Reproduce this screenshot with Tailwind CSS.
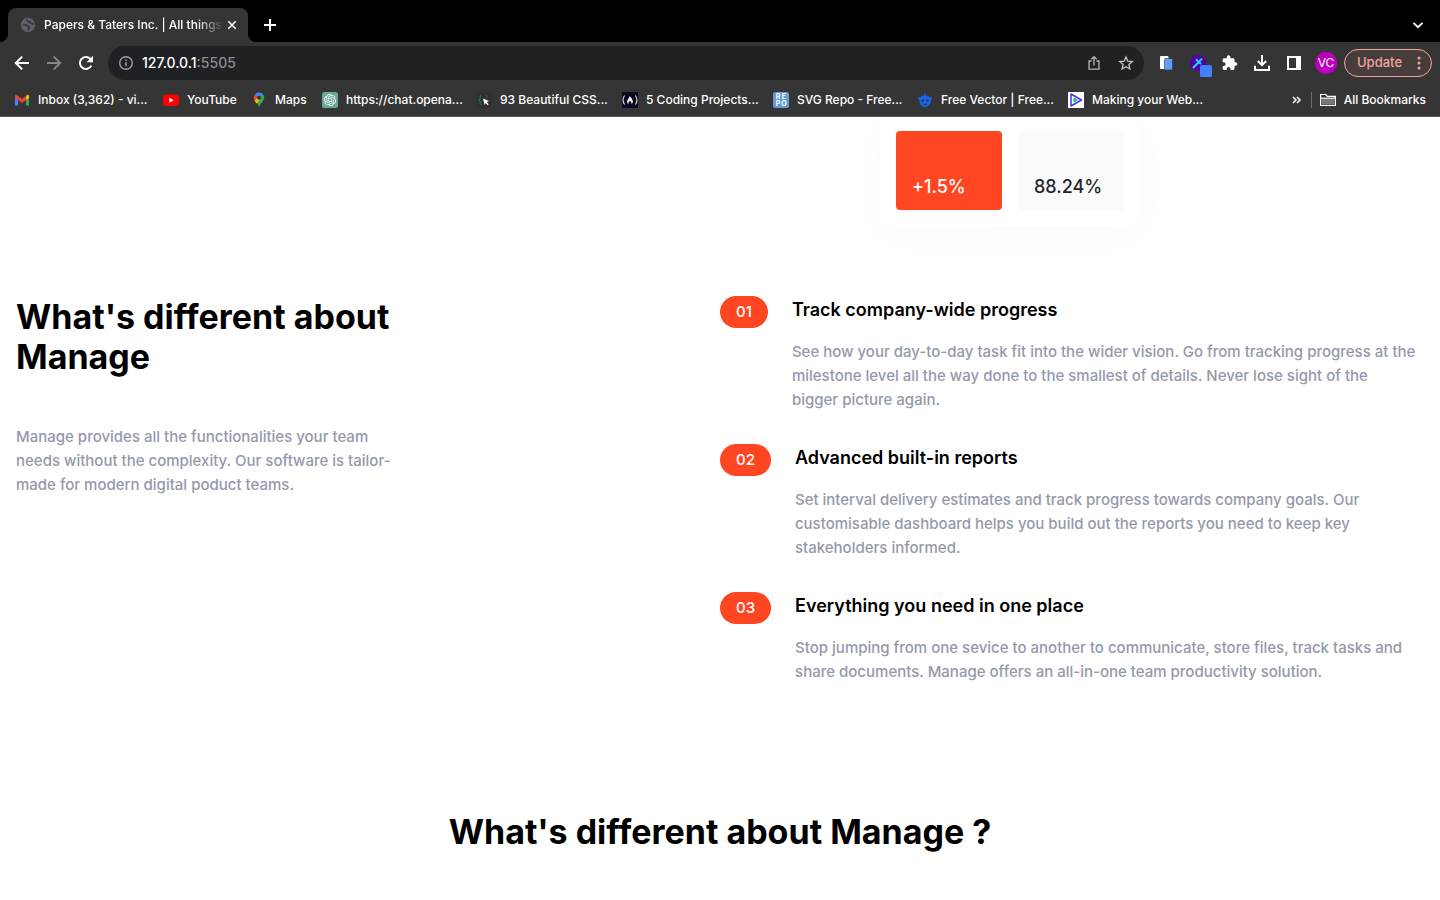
<!DOCTYPE html>
<html lang="en">
<head>
<meta charset="utf-8">
<meta name="viewport" content="width=device-width, initial-scale=1">
<title>Papers &amp; Taters Inc. | All things</title>
<script src="https://cdn.jsdelivr.net/npm/@tailwindcss/browser@4"></script>
</head>
<body class="flex min-h-screen flex-col overflow-x-hidden bg-white font-[Inter,sans-serif] text-black">
<header class="text-white">
  <!-- Tab strip -->
  <div class="flex h-[42px] items-end bg-black">
    <div class="flex items-end">
      <svg class="h-2 w-2" viewBox="0 0 8 8"><path d="M8 0v8H0a8 8 0 0 0 8-8z" fill="#353535"/></svg>
      <div class="flex h-[34px] w-60 items-center rounded-t-lg bg-[#353535] pr-2 pl-3">
        <svg class="h-4 w-4 shrink-0" viewBox="0 0 16 16"><circle cx="8" cy="8" r="7.2" fill="#5f6368"/><path d="M3.2 7.2c1.800 1 3.600.3 4.300 1.500.7 1.200 1.800.5 1.900 1.900.1 1.200-1.300 1.500-1.400 3M7.300 2.400c-.7 1.600.500 2.200 1.700 2.300 1.300.2 1 1.700 2.600 1.900.9.100 1.400.1 2 .7" fill="none" stroke="#353535" stroke-width="1.700"/></svg>
        <span class="ml-2 flex-1 overflow-hidden text-xs font-medium whitespace-nowrap [mask-image:linear-gradient(to_right,black_84%,transparent)]">Papers &amp; Taters Inc. | All things</span>
        <button class="flex h-4 w-4 items-center justify-center" aria-label="Close tab"><svg class="h-4 w-4" viewBox="0 0 16 16"><path d="M4.300 4.300l7.400 7.400M11.700 4.300l-7.400 7.400" stroke="#fff" stroke-width="1.500"/></svg></button>
      </div>
      <svg class="h-2 w-2" viewBox="0 0 8 8"><path d="M0 0v8h8a8 8 0 0 1-8-8z" fill="#353535"/></svg>
    </div>
    <button class="ml-1 flex h-[34px] w-5 items-center justify-center" aria-label="New tab"><svg class="h-4 w-4" viewBox="0 0 16 16"><path d="M8 2v12M2 8h12" stroke="#fff" stroke-width="2"/></svg></button>
    <button class="mr-3 ml-auto flex h-[34px] w-5 items-center justify-center" aria-label="Search tabs"><svg class="h-4 w-4" viewBox="0 0 16 16"><path d="M3.500 5.800L8 10.200l4.500-4.400" fill="none" stroke="#fff" stroke-width="1.800"/></svg></button>
  </div>

  <!-- Toolbar -->
  <div class="flex h-[42px] items-center bg-[#353535] pr-2 pl-3">
    <div class="flex gap-3">
      <button aria-label="Back"><svg class="h-5 w-5" viewBox="0 0 20 20"><path d="M17 10H4M10.200 3.600L3.800 10l6.400 6.400" fill="none" stroke="#fff" stroke-width="2"/></svg></button>
      <button aria-label="Forward"><svg class="h-5 w-5" viewBox="0 0 20 20"><path d="M3 10h13M9.800 3.600l6.400 6.400-6.400 6.400" fill="none" stroke="#868686" stroke-width="2"/></svg></button>
      <button aria-label="Reload"><svg class="h-5 w-5" viewBox="0 0 20 20"><path d="M15.300 12.600A6 6 0 1 1 14.300 5.800L16 7.500" fill="none" stroke="#fff" stroke-width="2"/><path d="M17 2.800v6.400h-6.400z" fill="#fff"/></svg></button>
    </div>
    <div class="ml-3 flex h-[34px] flex-1 items-center rounded-full bg-[#202124] pr-2 pl-[10px]">
      <svg class="h-4 w-4" viewBox="0 0 16 16"><circle cx="8" cy="8" r="6.300" fill="none" stroke="#9aa0a6" stroke-width="1.400"/><path d="M8 7v4.300M8 4.500v1.600" stroke="#9aa0a6" stroke-width="1.500"/></svg>
      <a href="#" class="ml-2 text-sm font-medium text-[#8b8f94]" aria-label="Address"><span class="text-white">127.0.0.1</span>:5505</a>
      <button class="ml-auto" aria-label="Share"><svg class="h-5 w-5" viewBox="0 0 20 20"><path d="M7.500 8H5v8.200h10V8h-2.500M10 12.500V4M7.300 6.300L10 3.600l2.700 2.700" fill="none" stroke="#b5b7b9" stroke-width="1.300"/></svg></button>
      <button class="ml-3" aria-label="Bookmark this tab"><svg class="h-5 w-5" viewBox="0 0 20 20"><path d="M10 4l1.800 4.200 4.500.4-3.400 3 1 4.400-3.900-2.300-3.900 2.300 1-4.400-3.400-3 4.500-.4z" fill="none" stroke="#c4c6c8" stroke-width="1.300"/></svg></button>
    </div>
    <div class="ml-3 flex items-center gap-3">
      <button aria-label="Copy extension"><svg class="h-5 w-5" viewBox="0 0 20 20"><rect x="4" y="3" width="8.500" height="13" rx="1" fill="#fff"/><rect x="8.500" y="5.500" width="8" height="11.500" rx="1.200" fill="#5b9df8" stroke="#353535" stroke-width=".6"/></svg></button>
      <button aria-label="Colour picker extension"><svg class="h-5 w-5 overflow-visible" viewBox="0 0 20 20"><circle cx="10" cy="10" r="8" fill="#5500b0"/><path d="M5 15l6.500-6.800" stroke="#19d8f0" stroke-width="2"/><path d="M8 6.200l5 4.800M11 8.600l3-3" stroke="#19d8f0" stroke-width="2"/><rect x="12" y="12" width="12" height="12" rx="1.500" fill="#4380ff"/></svg></button>
      <button class="p-[2px]" aria-label="Extensions"><svg class="h-4 w-4" viewBox="1 1 23 22"><path d="M20.500 11H19V7c0-1.100-.9-2-2-2h-4V3.500a2.500 2.500 0 0 0-5 0V5H4c-1.100 0-2 .9-2 2v3.800h1.500a2.700 2.700 0 0 1 0 5.400H2V20c0 1.100.9 2 2 2h3.800v-1.500a2.700 2.700 0 0 1 5.400 0V22H17c1.100 0 2-.9 2-2v-4h1.500a2.500 2.500 0 0 0 0-5z" fill="#fff"/></svg></button>
      <button aria-label="Downloads"><svg class="h-5 w-5" viewBox="0 0 20 20"><path d="M10 2v10M5.800 8L10 12.200 14.200 8M3 12.800V17h14v-4.200" fill="none" stroke="#fff" stroke-width="2"/></svg></button>
      <button aria-label="Side panel"><svg class="h-5 w-5" viewBox="0 0 20 20"><path d="M3 3h14v14H3zM5 5v10h7V5z" fill="#fff" fill-rule="evenodd"/></svg></button>
    </div>
    <button class="ml-[11px] flex h-[22px] w-[22px] items-center justify-center rounded-full bg-[#bb00bd] text-xs" aria-label="Profile">VC</button>
    <button class="ml-[7px] flex h-7 w-[88px] items-center justify-between rounded-full border border-[#f5a49d] bg-[#483d3d] pr-2 pl-3 text-[13px] font-medium text-[#f5a49d]">Update<svg class="h-4 w-2" viewBox="0 0 8 16"><circle cx="4" cy="3" r="1.500" fill="#f5a49d"/><circle cx="4" cy="8" r="1.500" fill="#f5a49d"/><circle cx="4" cy="13" r="1.500" fill="#f5a49d"/></svg></button>
  </div>

  <!-- Bookmarks bar -->
  <nav class="flex h-[33px] items-center border-b border-[#5a5a5a] bg-[#353535] pr-[14px] pl-[14px] text-xs font-medium whitespace-nowrap">
    <a href="#" class="flex w-[149px] items-center gap-2"><svg class="h-4 w-4" viewBox="0 0 16 16"><path d="M1 4v9.500h3V7z" fill="#4285f4"/><path d="M15 4v9.500h-3V7z" fill="#34a853"/><path d="M12 4.200L13.200 3c.8-.6 1.800 0 1.800 1v1.800l-3 2.300z" fill="#fbbc04"/><path d="M1 4c0-1.100 1-1.600 1.800-1L8 7l4-3v4.100L8 11 1 5.800z" fill="#ea4335"/></svg>Inbox (3,362) - vi...</a>
    <a href="#" class="flex w-[88px] items-center gap-2"><svg class="h-4 w-4" viewBox="0 0 16 16"><rect y="2.500" width="16" height="11.500" rx="3" fill="#f00"/><path d="M6.400 5.800v4.900l4.200-2.450z" fill="#fff"/></svg>YouTube</a>
    <a href="#" class="flex w-[71px] items-center gap-2"><svg class="h-4 w-4" viewBox="0 0 16 16"><path d="M8 .5a5.300 5.300 0 0 1 5.300 5.300C13.300 9.800 9.200 10.500 8 15.500c-.5-2-1.400-3.300-2.400-4.400z" fill="#34a853"/><path d="M3.900 2.500A5.300 5.300 0 0 1 12.100 2.500L8 7.500z" fill="#4285f4"/><path d="M3.900 2.500L7 5.200 3.500 8.400C2.400 6.300 2.500 4.100 3.900 2.500z" fill="#ea4335"/><path d="M3.500 8.400L7 5l2.600 2.300-4 4.100c-.8-.9-1.600-1.900-2.100-3z" fill="#fbbc04"/><circle cx="8" cy="5.800" r="2" fill="#353535"/></svg>Maps</a>
    <a href="#" class="flex w-[154px] items-center gap-2"><svg class="h-4 w-4" viewBox="-4 -4 32 32"><rect x="-4" y="-4" width="32" height="32" rx="5" fill="#6aa999"/><path fill="#fff" d="M22.2819 9.8211a5.9847 5.9847 0 0 0-.5157-4.9108 6.0462 6.0462 0 0 0-6.5098-2.9A6.0651 6.0651 0 0 0 4.9807 4.1818a5.9847 5.9847 0 0 0-3.9977 2.9 6.0462 6.0462 0 0 0 .7427 7.0966 5.98 5.98 0 0 0 .511 4.9107 6.051 6.051 0 0 0 6.5146 2.9001A5.9847 5.9847 0 0 0 13.2599 24a6.0557 6.0557 0 0 0 5.7718-4.2058 5.9894 5.9894 0 0 0 3.9977-2.9001 6.0557 6.0557 0 0 0-.7475-7.073zm-9.022 12.6081a4.4755 4.4755 0 0 1-2.8764-1.0408l.1419-.0804 4.7783-2.7582a.7948.7948 0 0 0 .3927-.6813v-6.7369l2.02 1.1686a.071.071 0 0 1 .038.052v5.5826a4.504 4.504 0 0 1-4.4945 4.4944zm-9.6607-4.1254a4.4708 4.4708 0 0 1-.5346-3.0137l.142.0852 4.783 2.7582a.7712.7712 0 0 0 .7806 0l5.8428-3.3685v2.3324a.0804.0804 0 0 1-.0332.0615L9.74 19.9502a4.4992 4.4992 0 0 1-6.1408-1.6464zM2.3408 7.8956a4.485 4.485 0 0 1 2.3655-1.9728V11.6a.7664.7664 0 0 0 .3879.6765l5.8144 3.3543-2.0201 1.1685a.0757.0757 0 0 1-.071 0l-4.8303-2.7865A4.504 4.504 0 0 1 2.3408 7.872zm16.5963 3.8558L13.1038 8.364 15.1192 7.2a.0757.0757 0 0 1 .071 0l4.8303 2.7913a4.4944 4.4944 0 0 1-.6765 8.1042v-5.6772a.79.79 0 0 0-.407-.667zm2.0107-3.0231l-.142-.0852-4.7735-2.7818a.7759.7759 0 0 0-.7854 0L9.409 9.2297V6.8974a.0662.0662 0 0 1 .0284-.0615l4.8303-2.7866a4.4992 4.4992 0 0 1 6.6802 4.66zM8.3065 12.863l-2.02-1.1638a.0804.0804 0 0 1-.038-.0567V6.0742a4.4992 4.4992 0 0 1 7.3757-3.4537l-.142.0805L8.704 5.459a.7948.7948 0 0 0-.3927.6813zm1.0976-2.3654l2.602-1.4998 2.6069 1.4998v2.9994l-2.5974 1.4997-2.6067-1.4997z"/></svg>https://chat.opena...</a>
    <a href="#" class="flex w-[146px] items-center gap-2"><svg class="h-4 w-4" viewBox="0 0 16 16"><rect width="16" height="16" rx="2" fill="#303030"/><path d="M5.500 3.500c-1.600 0-1.300 1-1.300 2.500S3.500 8 2.500 8c1 0 1.700.5 1.700 2s-.3 2.500 1.300 2.500M9.500 3.500c1.600 0 1.300 1 1.300 2" fill="none" stroke="#12834f" stroke-width="1.200"/><path d="M7 6.500l6 2.500-2.300 1 2 2.300-1 .9-2-2.300-1.100 2z" fill="#fff"/></svg>93 Beautiful CSS...</a>
    <a href="#" class="flex w-[151px] items-center gap-2"><svg class="h-4 w-4" viewBox="0 0 16 16"><path d="M0 0h16v16H0z" fill="#0a0a23"/><path d="M2.600 3.500c-2 2.500-2 6.500 0 9M13.400 3.500c2 2.500 2 6.500 0 9" fill="none" stroke="#ddd" stroke-width="1.100"/><path d="M7.800 4c1 1.600 3 3.400 3 5.500 0 1.200-.5 2.200-1.300 2.700.4-1.300 0-2.300-1.500-3.400-1.500 1.100-1.900 2.100-1.500 3.400-.8-.5-1.300-1.500-1.300-2.700 0-1.800 2-2.800 2.600-5.500z" fill="#fff"/></svg>5 Coding Projects...</a>
    <a href="#" class="flex w-[144px] items-center gap-2"><span class="grid h-4 w-4 shrink-0 grid-cols-2 justify-items-center rounded-xs bg-[#659bd3] px-[2px] py-px text-[7px] leading-[7px] font-bold" aria-label="SVG Repo logo"><span>R</span><span>E</span><span>P</span><span>O</span></span>SVG Repo - Free...</a>
    <a href="#" class="flex w-[151px] items-center gap-2"><svg class="h-4 w-4" viewBox="0 0 16 16"><path d="M7.300 1l1.200 0 .3 2.800h-1.500zM3.200 5.500C5 3 11 3 12.800 5.500l2.200-.3-.3 2.200-1.200.6c.5 4-2 7-5.500 7s-6-3-5.500-7L1.300 7.400.8 5.200zM5 3l1 1.500-1.300.5zM11 3l-1 1.500 1.300.5z" fill="#1767ee"/><circle cx="5.700" cy="8.500" r="1.300" fill="#353535"/><circle cx="10.300" cy="8.500" r="1.300" fill="#353535"/><path d="M6 11.800c1.300.8 2.700.8 4 0" stroke="#353535" fill="none"/></svg>Free Vector | Free...</a>
    <a href="#" class="flex items-center gap-2"><svg class="h-4 w-4" viewBox="0 0 16 16"><path d="M0 0h16v16H0z" fill="#fff"/><path d="M3 2l10.500 6L3 14z" fill="none" stroke="#512fe8" stroke-width="1.500" stroke-linejoin="round"/><path d="M5.500 5.300L10 8l-4.500 2.700z" fill="#16b7b0"/></svg>Making your Web...</a>
    <button class="mr-1 ml-auto px-[2px]" aria-label="More bookmarks"><svg class="h-4 w-4" viewBox="0 0 16 16"><path d="M4 5l3 3-3 3M8 5l3 3-3 3" fill="none" stroke="#fff" stroke-width="1.500"/></svg></button>
    <span class="h-4 w-px bg-[#6d6d6d]"></span>
    <a href="#" class="ml-2 flex items-center gap-2"><svg class="h-4 w-4" viewBox="0 0 16 16"><path d="M.6 13.500V2.500h5.200l1.500 1.800h8.100v9.200z" fill="none" stroke="#fff" stroke-width="1.200"/><path d="M1.500 6.800h13v5.800h-13z" fill="#777"/><path d="M.6 6.200h14.800" stroke="#fff" stroke-width="1.200"/></svg>All Bookmarks</a>
  </nav>
</header>

<main class="flex-1">
  <!-- Lower edge of the hero dashboard card -->
  <section class="grid grid-cols-2 overflow-hidden pb-8">
    <div class="col-start-2 ml-40 grid w-[260px] grid-cols-2 gap-4 rounded-b-lg bg-white px-4 pt-[14px] pb-4 shadow-[0_8px_40px_#00000005]">
      <div class="flex h-[79px] items-end rounded-sm bg-[#ff4622] px-4 pb-[9px] text-lg font-medium text-white">+1.5%</div>
      <div class="flex h-[79px] items-end rounded-sm bg-[#fafafa] px-4 pb-[9px] text-lg font-medium text-[#1d262d]">88.24%</div>
    </div>
  </section>

  <section class="grid grid-cols-2 px-4 pt-[38px]">
    <div class="max-w-96 pt-px">
      <h2 class="text-[34px] leading-10 font-bold">What's different about Manage</h2>
      <p class="mt-12 text-[15px] leading-6 font-medium text-[#9499aa]">Manage provides all the functionalities your team needs without the complexity. Our software is tailor-made for modern digital poduct teams.</p>
    </div>
    <ol class="flex flex-col gap-8">
      <li class="flex items-start gap-6">
        <span class="rounded-full bg-[#ff4622] px-4 py-1 text-[15px] leading-6 font-medium text-white">01</span>
        <div><h3 class="text-lg leading-7 font-semibold">Track company-wide progress</h3>
        <p class="mt-4 text-[15px] leading-6 font-medium text-[#9499aa]">See how your day-to-day task fit into the wider vision. Go from tracking progress at the milestone level all the way done to the smallest of details. Never lose sight of the bigger&nbsp;picture again.</p></div>
      </li>
      <li class="flex items-start gap-6">
        <span class="rounded-full bg-[#ff4622] px-4 py-1 text-[15px] leading-6 font-medium text-white">02</span>
        <div><h3 class="text-lg leading-7 font-semibold">Advanced built-in reports</h3>
        <p class="mt-4 text-[15px] leading-6 font-medium text-[#9499aa]">Set interval delivery estimates and track progress towards company goals. Our customisable dashboard helps you build out the reports you need to keep key stakeholders informed.</p></div>
      </li>
      <li class="flex items-start gap-6">
        <span class="rounded-full bg-[#ff4622] px-4 py-1 text-[15px] leading-6 font-medium text-white">03</span>
        <div><h3 class="text-lg leading-7 font-semibold">Everything you need in one place</h3>
        <p class="mt-4 text-[15px] leading-6 font-medium text-[#9499aa]">Stop jumping from one sevice to another to communicate, store files, track tasks and share documents. Manage offers an all-in-one team productivity solution.</p></div>
      </li>
    </ol>
  </section>

  <h2 class="mt-32 text-center text-[34px] leading-10 font-bold">What's different about Manage ?</h2>
</main>
</body>
</html>
